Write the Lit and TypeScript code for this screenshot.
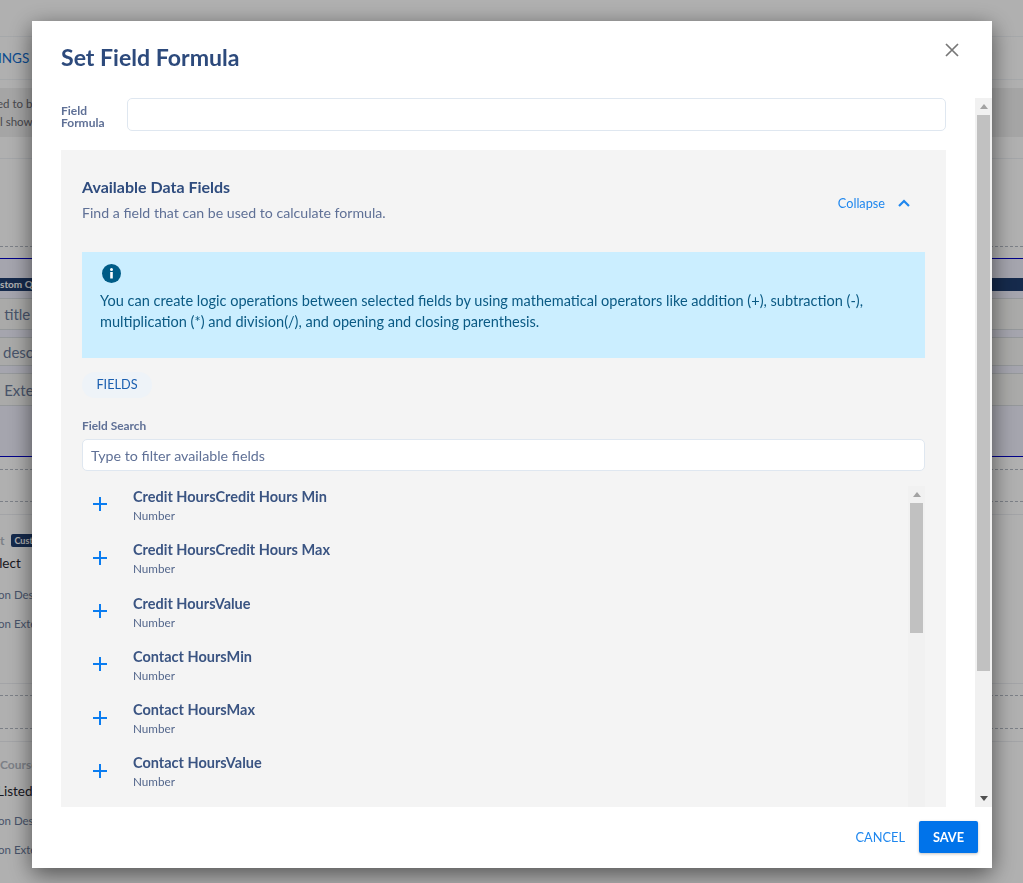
import { LitElement, html, css, svg } from "lit";
import { customElement } from "lit/decorators.js";

const fields = ["Credit HoursCredit Hours Min", "Credit HoursCredit Hours Max", "Credit HoursValue", "Contact HoursMin", "Contact HoursMax", "Contact HoursValue"];

const plus = svg`<path d="M7 0V14M0 7H14" stroke="#0a7cf0" stroke-width="2" fill="none"/>`;

@customElement("app-root")
export class AppRoot extends LitElement {
  static styles = css`
    :host { display: block; height: 883px; overflow: hidden; position: relative; font-family: Lato, "Open Sans", sans-serif; background: #fff; }
    * { box-sizing: border-box; }
    .bg { display: flex; flex-direction: column; height: 883px; color: #6a7a9a; white-space: nowrap; overflow: hidden; }
    .s { display: flex; align-items: center; flex: none; overflow: hidden; }
    .nav { height: 44px; margin-top: 36px; border-top: 1px solid #f0f3f7; border-bottom: 1px solid #f0f3f7; color: #0f6dd0; font-size: 13.5px; }
    .note { height: 49px; margin-top: 8px; background: #f0f0f0; flex-direction: column; align-items: flex-start; justify-content: center; font-size: 11.5px; line-height: 18px; color: #6a6a70; }
    .rule { height: 88px; margin-top: 21px; border-top: 1px solid #eef1f5; }
    .dash { height: 0; border-top: 1px dashed #b4bac4; flex: none; }
    .section { height: 199px; margin-top: 11px; background: #efeffc; border-top: 1px solid #0000c8; border-bottom: 1px solid #0000c8; display: flex; flex-direction: column; }
    .qbadge { height: 13px; margin-top: 19px; background: #1f3d6e; color: #fff; font-size: 10px; font-weight: 700; line-height: 13px; flex: none; overflow: hidden; }
    .qrow { background: #f7f7f5; border-top: 1px solid #d8dce0; border-bottom: 1px solid #d8dce0; font-size: 15px; color: #6a7a9a; }
    .q1 { height: 32px; margin-top: 7px; }
    .q2 { height: 29px; margin-top: 7px; padding-left: 3px; }
    .q3 { height: 33px; margin-top: 7px; }
    .thin { height: 0; border-top: 1px solid #eceef2; flex: none; }
    .lab { font-size: 12px; font-weight: 700; color: #b4bac4; height: 14px; gap: 7px; }
    .course { height: 17px; }
    .cust { background: #1f3d6e; color: #fff; font-size: 9px; height: 13px; line-height: 13px; border-radius: 2px; padding: 0 3px; width: 40px; flex: none; }
    .val { font-size: 13.5px; color: #1f2530; height: 20px; }
    .sub { font-size: 11.5px; color: #6a7a9a; height: 16px; }
    .m6 { margin-top: 6px; } .m8 { margin-top: 8px; } .m11 { margin-top: 11px; } .m12 { margin-top: 12px; }
    .m13 { margin-top: 13px; } .m14 { margin-top: 14px; } .m18 { margin-top: 18px; } .m31 { margin-top: 31px; }
    .m32 { margin-top: 32px; } .m52 { margin-top: 52px; }
    .o2 { margin-left: -2px; } .o3 { margin-left: -3px; } .o4 { margin-left: -4px; } .o8 { margin-left: -8px; }

    .overlay { position: fixed; inset: 0; background: rgba(0,0,0,.31); padding: 21px 31px 15px 32px; }
    .modal { height: 847px; background: #fff; box-shadow: 0 6px 22px rgba(0,0,0,.55); display: flex; flex-direction: column; }
    .head { height: 77px; flex: none; display: flex; justify-content: space-between; padding: 22px 33px 0 29px; }
    h1 { margin: 0; font-size: 23.1px; line-height: 29px; font-weight: 700; color: #2d4a7c; }
    .close { margin-top: 0; width: 14px; height: 14px; display: block; }
    .body { flex: 1; display: flex; min-height: 0; }
    .scroll { flex: 1; min-width: 0; overflow: hidden; padding: 0 29px; }
    .bar { width: 17px; flex: none; background: #f1f1f1; display: flex; flex-direction: column; align-items: center; padding: 0 2px; position: relative; }
    .arrow { height: 17px; flex: none; display: flex; align-items: center; justify-content: center; }
    .arrow svg { display: block; }
    .thumb { width: 13px; background: #c1c1c1; flex: none; }
    .t130 { height: 130px; } .t556 { height: 556px; }
    .spacer { flex: 1; }
    .formula { display: flex; height: 33px; }
    .formula label { width: 66px; flex: none; padding-top: 7px; font-size: 12px; line-height: 12px; font-weight: 700; color: #5f7096; }
    .input { border: 1px solid #dfe7f0; border-radius: 5px; background: #fff; height: 33px; flex: 1; }
    .panel { margin-top: 19px; background: #f4f4f4; padding: 28px 21px 0; height: 700px; overflow: hidden; }
    .ph { display: flex; justify-content: space-between; height: 74px; }
    h2 { margin: 0; font-size: 16px; line-height: 18px; font-weight: 700; color: #2f4c7e; }
    .ph p { margin: 8px 0 0; font-size: 14.15px; line-height: 17px; color: #5f7096; }
    .collapse { display: flex; align-items: center; gap: 13px; color: #1f87ee; font-size: 12.7px; height: 17px; margin: 16px 15px 0 0; }
    .info { background: #cbeeff; height: 106px; padding: 12px 18px 0; color: #0b5a84; font-size: 14.54px; line-height: 21px; }
    .info svg { display: block; margin-left: 2px; margin-bottom: 7px; }
    .pill { display: inline-block; margin-top: 14px; height: 26px; line-height: 25px; width: 70px; text-align: center; border-radius: 13px; background: #eef3f8; color: #1a5fb0; font-size: 12.7px; vertical-align: top; }
    .fs { margin-top: 20px; font-size: 11.9px; line-height: 15px; font-weight: 700; color: #5f7096; }
    .search { margin-top: 6px; height: 32px; border: 1px solid #dfe7f0; border-radius: 5px; background: #fff; padding: 0 8px; line-height: 31px; font-size: 14.25px; color: #5f7096; }
    .listwrap { display: flex; margin-top: 15px; height: 340px; }
    .list { flex: 1; min-width: 0; }
    .item { height: 53.3px; display: flex; padding-left: 11px; }
    .item svg { margin-top: 11.4px; margin-right: 26px; flex: none; }
    .t { font-size: 14.5px; line-height: 17px; font-weight: 700; color: #3a5482; margin-top: 2px; }
    .d { font-size: 11.7px; line-height: 14px; color: #54678c; margin-top: 3px; }
    .foot { height: 61px; flex: none; display: flex; justify-content: flex-end; align-items: flex-start; padding: 14px 14px 0 0; gap: 14px; }
    .cancel { font-size: 12.8px; line-height: 32px; color: #1f87ee; }
    .save { width: 59px; height: 32px; background: #0073ea; color: #fff; font-size: 12.8px; font-weight: 700; line-height: 32px; text-align: center; border-radius: 2px; box-shadow: 0 1px 3px rgba(0,0,0,.25); }
  `;

  render() {
    return html`
      <div class="bg">
        <div class="s nav"><span class="o2">INGS</span></div>
        <div class="s note"><span class="o3">ed to build</span><span>l show</span></div>
        <div class="s rule"></div>
        <div class="dash"></div>
        <div class="section">
          <div class="qbadge">stom Question</div>
          <div class="s qrow q1"><span class="o8">n title</span></div>
          <div class="s qrow q2">desc</div>
          <div class="s qrow q3"><span class="o8">n Exte</span></div>
        </div>
        <div class="dash m12"></div>
        <div class="dash m31"></div>
        <div class="thin m12"></div>
        <div class="s lab m18"><span>t</span><span class="cust">Custom</span></div>
        <div class="s val m6"><span class="o8">elect</span></div>
        <div class="s sub m13"><span class="o2">on Des</span></div>
        <div class="s sub m13"><span class="o2">on Exte</span></div>
        <div class="thin m52"></div>
        <div class="dash m11"></div>
        <div class="dash m32"></div>
        <div class="thin m12"></div>
        <div class="s lab course m14">Course</div>
        <div class="s val m8"><span class="o3">Listed</span></div>
        <div class="s sub m11"><span class="o2">on Des</span></div>
        <div class="s sub m13"><span class="o2">on Exte</span></div>
      </div>
      <div class="overlay">
        <div class="modal">
          <div class="head">
            <h1>Set Field Formula</h1>
            <svg class="close" viewBox="0 0 14 14"><path d="M1 1L13 13M13 1L1 13" stroke="#777" stroke-width="1.7" fill="none"/></svg>
          </div>
          <div class="body">
            <div class="scroll">
              <div class="formula"><label>Field Formula</label><div class="input"></div></div>
              <div class="panel">
                <div class="ph">
                  <div><h2>Available Data Fields</h2><p>Find a field that can be used to calculate formula.</p></div>
                  <div class="collapse">Collapse
                    <svg width="12" height="8" viewBox="0 0 12 8"><path d="M1 7L6 2L11 7" stroke="#1f87ee" stroke-width="2.2" fill="none"/></svg>
                  </div>
                </div>
                <div class="info">
                  <svg width="19" height="19" viewBox="0 0 19 19"><circle cx="9.5" cy="9.5" r="9.5" fill="#005c87"/><rect x="8.2" y="8" width="2.6" height="6.5" fill="#fff"/><circle cx="9.5" cy="5.4" r="1.5" fill="#fff"/></svg>
                  You can create logic operations between selected fields by using mathematical operators like addition (+), subtraction (-), multiplication (*) and division(/), and opening and closing parenthesis.
                </div>
                <div class="pill">FIELDS</div>
                <div class="fs">Field Search</div>
                <div class="search">Type to filter available fields</div>
                <div class="listwrap">
                  <div class="list">
                    ${fields.map(f => html`<div class="item">
                      <svg width="14" height="14" viewBox="0 0 14 14">${plus}</svg>
                      <div><div class="t">${f}</div><div class="d">Number</div></div>
                    </div>`)}
                  </div>
                  <div class="bar">
                    <div class="arrow"><svg width="8" height="5" viewBox="0 0 8 5"><path d="M4 0L8 5H0Z" fill="#a3a3a3"/></svg></div>
                    <div class="thumb t130"></div>
                  </div>
                </div>
              </div>
            </div>
            <div class="bar">
              <div class="arrow"><svg width="8" height="5" viewBox="0 0 8 5"><path d="M4 0L8 5H0Z" fill="#a3a3a3"/></svg></div>
              <div class="thumb t556"></div>
              <div class="spacer"></div>
              <div class="arrow"><svg width="8" height="5" viewBox="0 0 8 5"><path d="M4 5L8 0H0Z" fill="#505050"/></svg></div>
            </div>
          </div>
          <div class="foot">
            <div class="cancel">CANCEL</div>
            <div class="save">SAVE</div>
          </div>
        </div>
      </div>
    `;
  }
}
